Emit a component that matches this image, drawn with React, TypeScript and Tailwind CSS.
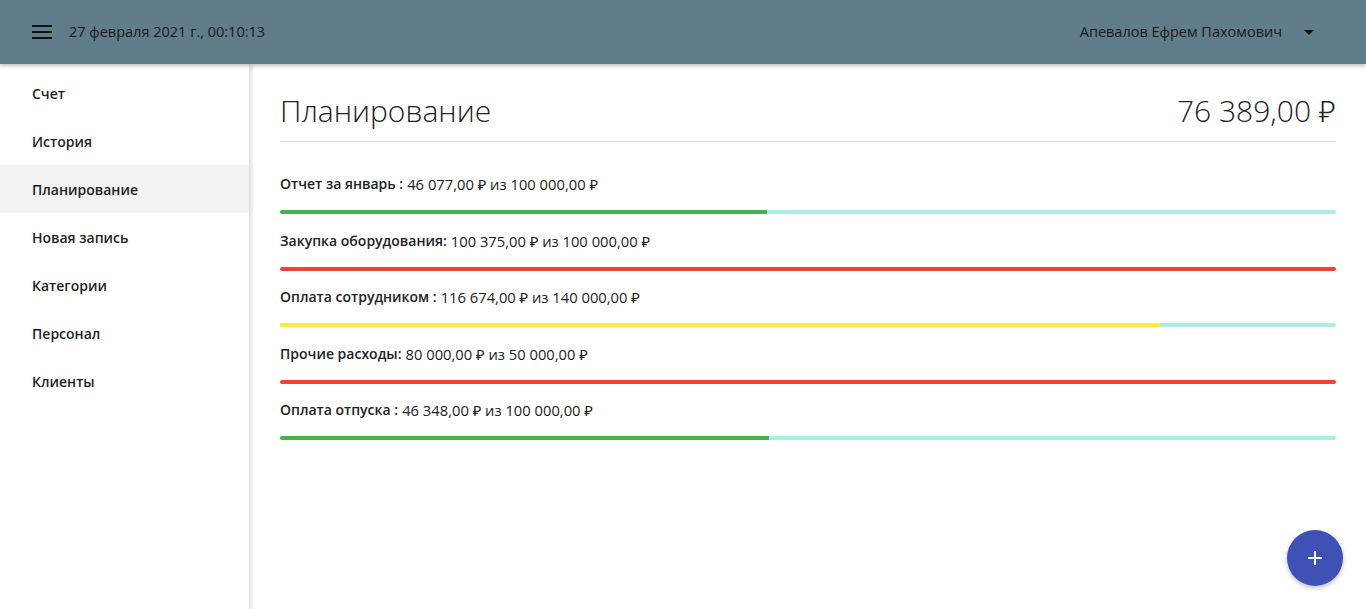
import React from "react";

const nav = ["Счет", "История", "Планирование", "Новая запись", "Категории", "Персонал", "Клиенты"];

const plans = [
  { title: "Отчет за январь :", value: "46 077,00 ₽ из 100 000,00 ₽", pct: 46.077, color: "bg-[#4caf50]" },
  { title: "Закупка оборудования:", value: "100 375,00 ₽ из 100 000,00 ₽", pct: 100, color: "bg-[#f44336]" },
  { title: "Оплата сотрудником :", value: "116 674,00 ₽ из 140 000,00 ₽", pct: 83.34, color: "bg-[#ffeb3b]" },
  { title: "Прочие расходы:", value: "80 000,00 ₽ из 50 000,00 ₽", pct: 100, color: "bg-[#f44336]" },
  { title: "Оплата отпуска :", value: "46 348,00 ₽ из 100 000,00 ₽", pct: 46.348, color: "bg-[#4caf50]" },
];

export default function App() {
  return (
    <div className="h-[609px] w-full flex flex-col overflow-hidden bg-white text-[#212121]" style={{ fontFamily: "'Open Sans', 'Noto Sans', sans-serif" }}>
      {/* header */}
      <header className="relative z-20 h-16 shrink-0 bg-[#607d8b] flex items-center pl-8 pr-[52px] shadow-[0_2px_4px_rgba(0,0,0,0.25)]">
        <svg width="20" height="14" viewBox="0 0 20 14" className="text-[#111]">
          <rect x="0" y="0" width="20" height="2" fill="currentColor" />
          <rect x="0" y="6" width="20" height="2" fill="currentColor" />
          <rect x="0" y="12" width="20" height="2" fill="currentColor" />
        </svg>
        <span className="ml-[17px] text-[14.5px] text-[#1a1a1a]">27 февраля 2021 г., 00:10:13</span>
        <div className="ml-auto flex items-center">
          <span className="text-[14.5px] text-[#1a1a1a]">Апевалов Ефрем Пахомович</span>
          <svg width="10" height="5" viewBox="0 0 10 5" className="ml-[22px]">
            <path d="M0 0 L10 0 L5 5 Z" fill="#111" />
          </svg>
        </div>
      </header>

      <div className="flex flex-1 min-h-0">
        {/* sidebar */}
        <aside className="relative z-10 w-[250px] shrink-0 pt-[5px] bg-white shadow-[2px_0_3px_rgba(0,0,0,0.12)] border-r border-[#e3e3e3]">
          <ul>
            {nav.map((n) => (
              <li
                key={n}
                className={`h-12 flex items-center px-8 text-[14px] font-semibold text-[#1f1f1f] ${n === "Планирование" ? "bg-[#f2f2f2]" : ""}`}
              >
                {n}
              </li>
            ))}
          </ul>
        </aside>

        {/* content */}
        <main className="relative flex-1 px-[30px]">
          <div className="flex items-center justify-between h-[78px] pt-[16px] border-b border-[#e0e0e0]">
            <h1 className="text-[30px] font-light text-[#222]">Планирование</h1>
            <span className="text-[30px] font-light text-[#222]">76 389,00 ₽</span>
          </div>

          <div className="pt-[32px] flex flex-col gap-[16.5px]">
            {plans.map((p) => (
              <div key={p.title}>
                <p className="h-5 flex items-center gap-[4px] text-[14px] leading-5 text-[#222] whitespace-nowrap">
                  <span className="font-semibold">{p.title}</span>
                  <span className="text-[14.75px] leading-5">{p.value}</span>
                </p>
                <div className="mt-[16px] h-1 w-full rounded-[2px] bg-[#acece6] overflow-hidden">
                  <div className={`h-full ${p.color}`} style={{ width: `${p.pct}%` }} />
                </div>
              </div>
            ))}
          </div>

          <button className="absolute right-[23px] bottom-[23px] w-14 h-14 rounded-full bg-[#3f51b5] flex items-center justify-center shadow-[0_2px_5px_rgba(0,0,0,0.26)]">
            <svg width="14" height="14" viewBox="0 0 14 14">
              <rect x="6" y="0" width="2" height="14" fill="#fff" />
              <rect x="0" y="6" width="14" height="2" fill="#fff" />
            </svg>
          </button>
        </main>
      </div>
    </div>
  );
}
